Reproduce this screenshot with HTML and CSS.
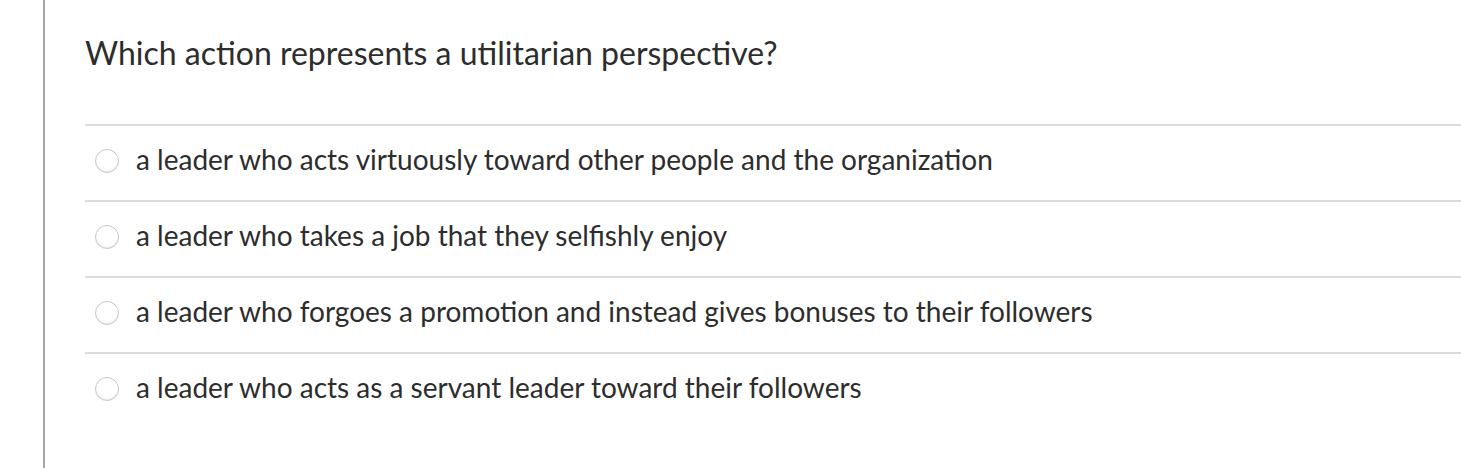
FILE: index.html
```html
<!DOCTYPE html>
<html>
<head>
<meta charset="utf-8">
<link rel="stylesheet" href="styles.css">
</head>
<body>
<div class="page">
  <div class="question">
    <div class="question-text">Which action represents a utilitarian perspective?</div>
    <div class="answers">
      <label class="answer"><span class="radio"></span><span class="answer-text">a leader who acts virtuously toward other people and the organization</span></label>
      <label class="answer"><span class="radio"></span><span class="answer-text">a leader who takes a job that they selfishly enjoy</span></label>
      <label class="answer"><span class="radio"></span><span class="answer-text">a leader who forgoes a promotion and instead gives bonuses to their followers</span></label>
      <label class="answer"><span class="radio"></span><span class="answer-text">a leader who acts as a servant leader toward their followers</span></label>
    </div>
  </div>
</div>
</body>
</html>
```

FILE: styles.css
```css
html, body {
  margin: 0;
  padding: 0;
  background: #ffffff;
}
body {
  font-family: Lato, "Open Sans", sans-serif;
  color: #2d2d2d;
}
.page {
  margin-left: 43px;
  border-left: 2px solid #a5a5a5;
  min-height: 468px;
  box-sizing: border-box;
  padding-left: 40px;
}
.question {
  padding-top: 33px;
}
.question-text {
  font-size: 32px;
  line-height: 40px;
  color: #2d2d2d;
  height: 91px;
}
.answers {
  display: flex;
  flex-direction: column;
}
.answer {
  display: flex;
  align-items: center;
  box-sizing: border-box;
  height: 76px;
  border-top: 2px solid #dcdcdc;
  padding-left: 10px;
  padding-bottom: 5px;
  gap: 17px;
}
.radio {
  width: 24px;
  height: 24px;
  border-radius: 50%;
  border: 1px solid #c6c6c6;
  box-sizing: border-box;
  background: radial-gradient(circle at 50% 30%, #ffffff 55%, #f0f0f0 100%);
  box-shadow: inset 0 -1px 1px rgba(0,0,0,0.04);
  flex: none;
}
.answer-text {
  font-size: 28px;
  color: #2d2d2d;
  margin-bottom: 3px;
}
```
